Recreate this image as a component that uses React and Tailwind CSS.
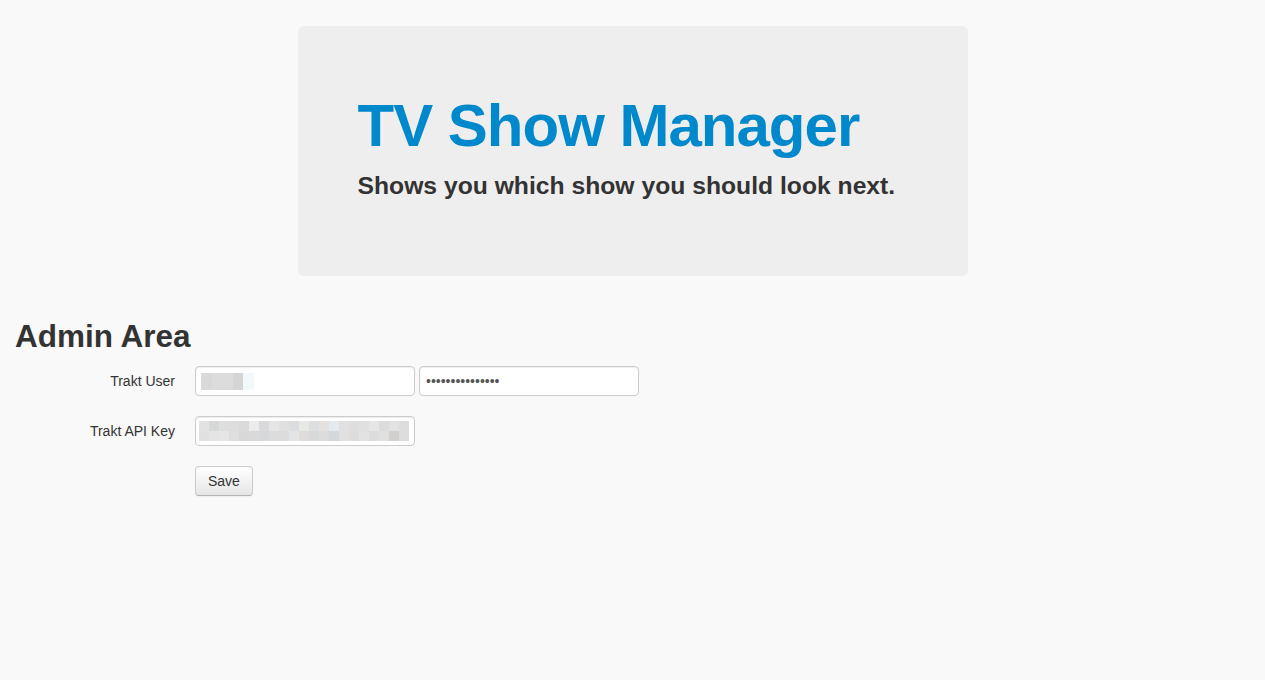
const userBlocks = ["bg-[#d9d9d9]", "bg-[#dcdcdc]", "bg-[#dcdcdc]", "bg-[#d5d5d5]", "bg-[#f3f8fa]"];

const keyRowA = [
  "bg-[#e2e2e2]", "bg-[#d6d8d8]", "bg-[#dedede]", "bg-[#dddddd]", "bg-[#dadada]", "bg-[#ececec]", "bg-[#d8dadb]",
  "bg-[#e6e5e3]", "bg-[#e0e0e0]", "bg-[#dadcdd]", "bg-[#e8e8e4]", "bg-[#dcdee0]", "bg-[#e4e2e0]", "bg-[#e4eaee]",
  "bg-[#e0e0e0]", "bg-[#dedede]", "bg-[#e0e0e0]", "bg-[#e6e6e6]", "bg-[#dcdcdc]", "bg-[#e2e2e2]", "bg-[#dddddd]",
];
const keyRowB = [
  "bg-[#e0e0e0]", "bg-[#e4e4e4]", "bg-[#e3e5e7]", "bg-[#dedede]", "bg-[#d8d8d8]", "bg-[#d9d9d9]", "bg-[#d6d8da]",
  "bg-[#dcdcdc]", "bg-[#dcdcdc]", "bg-[#e2e4e6]", "bg-[#dedcda]", "bg-[#d8dada]", "bg-[#dcdcdc]", "bg-[#d4d8da]",
  "bg-[#e0e0e0]", "bg-[#dcdcdc]", "bg-[#e2e2e2]", "bg-[#dcdcdc]", "bg-[#e0e0e0]", "bg-[#d2d0ce]", "bg-[#dddddd]",
];

const inputBox =
  "w-[220px] h-[30px] bg-white border border-[#cccccc] rounded-[4px] shadow-[inset_0_1px_1px_rgba(0,0,0,0.075)]";

export default function App() {
  return (
    <div className="min-h-screen bg-[#f9f9f9] text-[#333333] font-['Liberation_Sans',Arial,sans-serif] text-[14px] leading-[20px]">
      {/* Hero */}
      <div className="pt-[26px]">
        <div className="w-[670px] mx-auto bg-[#eeeeee] rounded-[6px] p-[60px]">
          <h1 className="mt-[10px] text-[60px] leading-[60px] font-bold tracking-[-1px] text-[#0088cc]">
            TV Show Manager
          </h1>
          <h3 className="my-[10px] text-[24.7px] leading-[40px] font-bold text-[#333333]">
            Shows you which show you should look next.
          </h3>
        </div>
      </div>

      {/* Admin */}
      <div className="pt-[30px] px-[15px]">
        <h2 className="my-[10px] text-[31.5px] leading-[40px] font-bold">Admin Area</h2>

        <div className="flex flex-col gap-[20px]">
          <div className="flex">
            <label className="w-[160px] pt-[5px] text-right">Trakt User</label>
            <div className="ml-[20px] flex gap-[4px]">
              <div className={`${inputBox} flex items-center px-[5px]`}>
                <div className="flex h-[17px]">
                  {userBlocks.map((c, i) => (
                    <div key={i} className={`w-[10.5px] h-full ${c}`} />
                  ))}
                </div>
              </div>
              <input
                type="password"
                defaultValue="xxxxxxxxxxxxxxx"
                className={`${inputBox} px-[6px] text-[#555555] outline-none`}
              />
            </div>
          </div>

          <div className="flex">
            <label className="w-[160px] pt-[5px] text-right">Trakt API Key</label>
            <div className="ml-[20px]">
              <div className={`${inputBox} flex items-center px-[3px]`}>
                <div className="flex flex-col">
                  <div className="flex h-[10px]">
                    {keyRowA.map((c, i) => (
                      <div key={i} className={`w-[10px] h-full ${c}`} />
                    ))}
                  </div>
                  <div className="flex h-[10px]">
                    {keyRowB.map((c, i) => (
                      <div key={i} className={`w-[10px] h-full ${c}`} />
                    ))}
                  </div>
                </div>
              </div>
            </div>
          </div>

          <div className="pl-[180px]">
            <button className="h-[30px] px-[12px] rounded-[4px] border border-[#cccccc] border-b-[#b3b3b3] bg-gradient-to-b from-white to-[#e6e6e6] shadow-[inset_0_1px_0_rgba(255,255,255,0.2),0_1px_2px_rgba(0,0,0,0.05)] text-[#333333] text-[14px] leading-[20px]">
              Save
            </button>
          </div>
        </div>
      </div>
    </div>
  );
}
